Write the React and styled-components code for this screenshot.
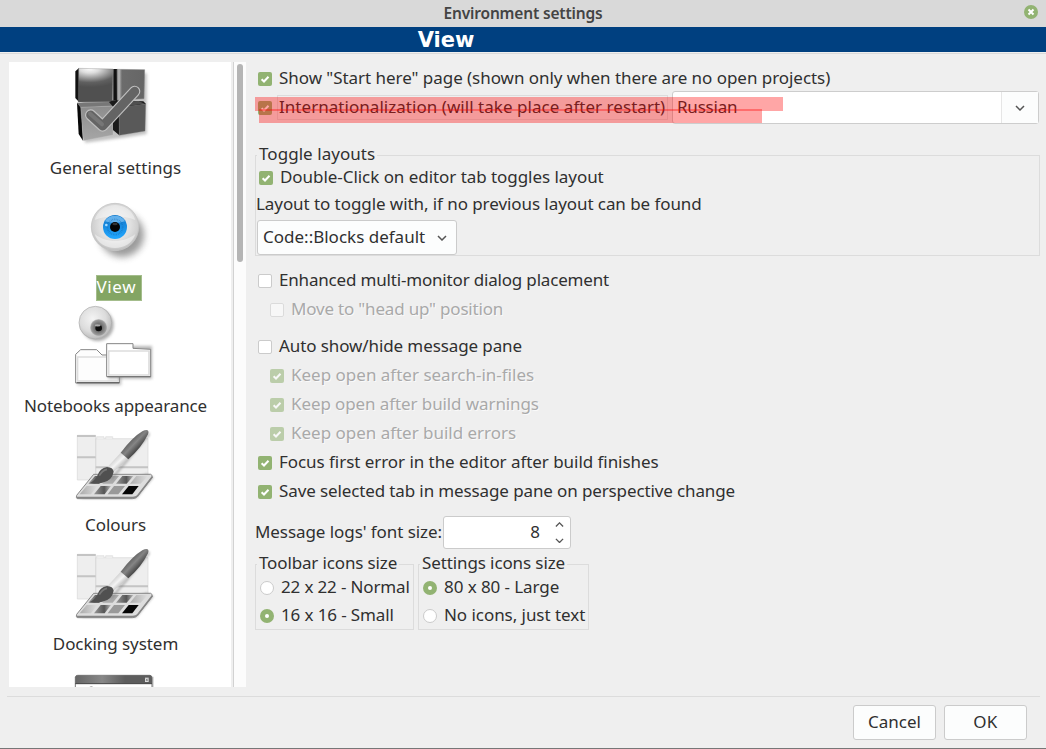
import React from "react";
import styled, { createGlobalStyle } from "styled-components";

const Global = createGlobalStyle`
  * { box-sizing: border-box; }
  body { margin: 0; background: #efefef; }
`;
const Dialog = styled.div`
  width: 1046px; height: 749px; display: flex; flex-direction: column; overflow: hidden;
  background: #efefef; color: #303030; border-bottom: 1px solid #777;
  font: 17px "Noto Sans", "Open Sans", sans-serif;
`;
const TitleBar = styled.header`
  height: 27px; flex: none; background: #d9d9d9; color: #444; display: grid;
  grid-template-columns: 24px 1fr 24px; align-items: center; text-align: center; font-weight: 600; font-size: 15.5px;
`;
const Close = styled.button`
  width: 14px; height: 14px; border: 0; padding: 0; border-radius: 50%; background: #92b372; display: block; margin-left: 2px; margin-top: -3px;
  svg { display: block; }
`;
const Banner = styled.div`
  height: 25px; flex: none; background: #004080; color: #fff; font: bold 21px/26px "DejaVu Sans", sans-serif;
  text-align: center; padding-right: 154px;
`;
const TopRule = styled.div`height: 1px; flex: none; background: #dadada; margin-top: 1px;`;
const Body = styled.main`
  flex: none; height: 643px; display: flex; margin: 0 6px 0 7px; padding: 8px 0 0 2px;
  border-bottom: 1px solid #dcdcdc;
`;
const List = styled.nav`width: 222px; height: 625px; background: #fff; overflow: hidden; padding-top: 6px;`;
const Item = styled.div`
  height: 119px; display: flex; flex-direction: column; align-items: center; padding-right: 9px;
  svg { display: block; width: 80px; height: 80px; overflow: visible; flex: none; margin-right: 1px; }
`;
const ItemLabel = styled.div`
  margin-top: 8px; height: 26px; line-height: 24px; border: 1px solid transparent;
  ${(p) => p.$on && "background:#83a563;border-color:#a4bd8c;color:#fff;width:46px;margin-left:6px;"}
`;
const Track = styled.div`
  width: 13px; height: 625px; margin-left: 2px; background: #fcfcfc; border-left: 1px solid #d2d2d2; padding: 2px 3px 0;
`;
const Thumb = styled.div`width: 6px; height: 198px; border-radius: 3px; background: #b5b5b5;`;
const Panel = styled.section`flex: 1; margin-left: 9px; display: flex; flex-direction: column; align-items: flex-start;`;
const Row = styled.label`
  height: 29px; flex: none; display: flex; align-items: center; padding-left: ${(p) => p.$in ?? 3}px;
  margin-top: ${(p) => p.$mt || 0}px; color: ${(p) => (p.$off ? "#a9a9a9" : "inherit")};
  text-shadow: ${(p) => (p.$off ? "1px 1px 0 #fafafa" : "none")};
`;
const Box = styled.span`
  width: 14px; height: 14px; flex: none; margin-right: 7px; border-radius: ${(p) => (p.$round ? "50%" : "2px")};
  background: ${(p) => (p.$on ? "#92b372" : "#fff")}; border: ${(p) => (p.$on ? "0" : "1px solid #cbcbcb")};
  opacity: ${(p) => (p.$off ? 0.55 : 1)}; display: grid; place-items: center;
  svg { display: block; }
`;
const Dot = styled.span`width: 4px; height: 4px; border-radius: 50%; background: #fff;`;
const Txt = styled.span`
  display: inline-block; padding-bottom: 2px; line-height: 22px; vertical-align: top;
  white-space: nowrap; letter-spacing: ${(p) => p.$ls || 0}px;
`;
const LangRow = styled.div`
  height: 33px; width: 784px; margin-top: -2px; display: flex; align-items: center; position: relative; padding-left: 3px;
`;
const Focus = styled.span`
  width: 391px; height: 25px; margin-left: -2px; border: 1px solid #dcdcdc; padding-left: 1px; flex: none;
`;
const Combo = styled.div`
  margin-left: 4px; width: 367px; height: 33px; flex: none; border: 1px solid #cdcdcd; border-radius: 3px; background: #fff;
  display: flex; align-items: center; justify-content: space-between; padding-left: 4px;
`;
const ComboArrow = styled.span`
  width: 37px; height: 31px; border-left: 1px solid #e6e6e6; background: #fcfdfd; display: grid; place-items: center;
`;
const Mark = styled.span`
  position: absolute; background: rgba(255, 0, 0, 0.35); height: 14px; pointer-events: none;
  left: ${(p) => p.$x}px; top: ${(p) => p.$y}px; width: ${(p) => p.$w}px;
`;
const Group = styled.fieldset`
  border: 1px solid #dcdcdc; margin: 0; padding: 0; width: ${(p) => p.$w}px; height: ${(p) => p.$h}px; min-width: 0; flex: none;
  margin-top: ${(p) => p.$mt || 0}px;
`;
const Legend = styled.legend`
  padding: 0 2px; margin-left: 1px; height: 22px; line-height: 22px;
  ${Txt} { margin-top: -1px; }
`;
const Select = styled.div`
  width: 200px; height: 35px; margin: 3px 0 0 1px; background: #fcfdfd; border: 1px solid #cbcbcb; border-radius: 3px;
  display: flex; align-items: center; justify-content: space-between; padding: 0 9px 0 5px;
`;
const Plain = styled.div`height: 25px; padding-top: 1px; line-height: 24px;`;
const SpinRow = styled.div`height: 33px; margin-top: 10px; display: flex; align-items: center; flex: none;`;
const SpinLabel = styled.span`width: 188px;`;
const Spin = styled.div`
  width: 128px; height: 33px; background: #fff; border: 1px solid #cbcbcb; border-radius: 3px; display: flex;
  align-items: center; justify-content: flex-end; padding-right: 6px; gap: 15px;
`;
const SpinArrows = styled.span`display: flex; flex-direction: column; gap: 11px;`;
const Groups = styled.div`display: flex; gap: 4px; margin-top: 4px;`;
const Footer = styled.footer`flex: 1; display: flex; justify-content: flex-end; gap: 8px; padding: 8px 19px 0 0;`;
const Button = styled.button`
  width: 83px; height: 35px; background: #fcfdfd; border: 1px solid #cbcbcb; border-radius: 3px; padding: 0;
  font: inherit; color: inherit;
`;

const Tick = () => (
  <svg width="14" height="14" viewBox="0 0 14 14"><path d="M3.6 7.2 6 9.5 10.5 4.7" fill="none" stroke="#fff" strokeWidth="2" /></svg>
);
const Chevron = ({ up, s = 10 }) => (
  <svg width={s} height={s * 0.6} viewBox="0 0 10 6"><path d={up ? "M1 5 5 1 9 5" : "M1 1 5 5 9 1"} fill="none" stroke="#555" strokeWidth="1.5" /></svg>
);
const Check = ({ on, off, ls, children, inset, mt }) => (
  <Row $off={off} $in={inset} $mt={mt}><Box $on={on} $off={off}>{on && <Tick />}</Box><Txt $ls={ls}>{children}</Txt></Row>
);
const RadioRow = styled(Row)`height: 28px; margin-top: ${(p) => p.$mt || 0}px; padding-left: 4px;`;
const Radio = ({ on, ls, children, mt }) => (
  <RadioRow $mt={mt}><Box $round $on={on}>{on && <Dot />}</Box><Txt $ls={ls}>{children}</Txt></RadioRow>
);

const CubesIcon = () => (
  <svg viewBox="45 24 240 240">
    <defs>
      <radialGradient id="cA" cx=".22" cy="0" r=".75" gradientTransform="scale(1.5 .75)"><stop offset="0" stopColor="#fff" /><stop offset=".25" stopColor="#ddd" /><stop offset=".75" stopColor="#606060" /><stop offset="1" stopColor="#505050" /></radialGradient>
      <linearGradient id="cB"><stop offset="0" stopColor="#777" /><stop offset=".07" stopColor="#bbb" /><stop offset=".18" stopColor="#6c6c6c" /><stop offset="1" stopColor="#666" /></linearGradient>
      <linearGradient id="cC" x1="0" y1="0" x2="0" y2="1"><stop offset="0" stopColor="#8c8c8c" /><stop offset="1" stopColor="#a6a6a6" /></linearGradient>
      <filter id="sh" x="-20%" y="-20%" width="150%" height="150%"><feGaussianBlur stdDeviation="4" /></filter>
    </defs>
    <path d="M60 40H260V222L185 234 75 248Z" fill="#999" opacity=".6" filter="url(#sh)" />
    <path d="M46 34 57 24V126L46 114Z" fill="#111" />
    <path d="M56 25 159 27 157 125 55 126Z" fill="url(#cA)" stroke="#777" strokeWidth="1" />
    <path d="M160 27H172V124L160 120Z" fill="#111" />
    <path d="M171 28 254 29 252 116 172 120Z" fill="url(#cB)" stroke="#888" strokeWidth="1.5" />
    <path d="M51 128 64 140 69 242 56 222Z" fill="#080808" />
    <path d="M51 128 150 126 159 138 62 143Z" fill="#777" />
    <path d="M62 142 159 138V225L70 242Z" fill="url(#cC)" stroke="#ccc" strokeWidth="1" />
    <path d="M147 126 160 121 250 124 258 132 178 145 178 226 159 210V140Z" fill="#1a1a1a" />
    <path d="M177 142 257 132 255 213 178 226Z" fill="#595959" stroke="#777" strokeWidth="1" />
    <path d="M202 124 236 123 254 131 186 140Z" fill="#4f4f4f" />
    <path d="M92 165 128 198 224 94" fill="none" stroke="#bfbfbf" strokeWidth="34" strokeLinecap="round" strokeLinejoin="round" />
    <path d="M92 165 128 198 224 94" fill="none" stroke="#646464" strokeWidth="27" strokeLinecap="round" strokeLinejoin="round" />
    <path d="M90 161 126 193" fill="none" stroke="#808080" strokeWidth="12" strokeLinecap="round" opacity=".65" />
  </svg>
);
const EyeIcon = () => (
  <svg viewBox="225 -9 240 240">
    <defs>
      <radialGradient id="eW" cx=".5" cy=".45" r=".55"><stop offset="0" stopColor="#eee" /><stop offset=".6" stopColor="#e0e0e0" /><stop offset=".88" stopColor="#cfcfcf" /><stop offset="1" stopColor="#bbb" /></radialGradient>
      <linearGradient id="eB" x1="0" y1="0" x2="0" y2="1"><stop offset="0" stopColor="#0873c8" /><stop offset=".35" stopColor="#1786db" /><stop offset="1" stopColor="#22a8ff" /></linearGradient>
      <filter id="eS" x="-30%" y="-30%" width="170%" height="170%"><feGaussianBlur stdDeviation="11" /></filter>
    </defs>
    <circle cx="366" cy="135" r="66" fill="#666" opacity=".65" filter="url(#eS)" />
    <circle cx="345" cy="111" r="71" fill="url(#eW)" stroke="#c5c5c5" strokeWidth="2.5" />
    <path d="M284 90C300 30 390 30 406 90C370 75 320 75 284 90Z" fill="#fff" opacity=".4" />
    <path d="M284 132C300 188 390 188 406 132C370 160 320 160 284 132Z" fill="#fff" opacity=".45" />
    <circle cx="345" cy="111" r="36" fill="url(#eB)" />
    <path d="M315 94C326 72 364 72 375 94C355 100 335 100 315 94Z" fill="#7fc3f5" opacity=".75" />
    <circle cx="345" cy="111" r="23" fill="none" stroke="#0c64ac" strokeWidth="5" strokeDasharray="2 3" opacity=".5" />
    <circle cx="345" cy="111" r="15" fill="#050505" />
    <ellipse cx="345" cy="102" rx="8" ry="4" fill="#333" />
    <circle cx="319" cy="105" r="4" fill="#a5dbff" />
  </svg>
);
const NotebooksIcon = () => (
  <svg viewBox="225 348 240 240">
    <defs>
      <radialGradient id="nW" cx=".42" cy=".38" r=".62"><stop offset="0" stopColor="#f4f4f4" /><stop offset=".65" stopColor="#dcdcdc" /><stop offset="1" stopColor="#bbb" /></radialGradient>
      <radialGradient id="nI"><stop offset="0" stopColor="#4a4a4a" /><stop offset=".6" stopColor="#808080" /><stop offset=".85" stopColor="#999" /><stop offset="1" stopColor="#c8c8c8" /></radialGradient>
      <filter id="nS" x="-20%" y="-20%" width="150%" height="150%"><feGaussianBlur stdDeviation="4" /></filter>
    </defs>
    <circle cx="293" cy="405" r="48" fill="#777" opacity=".6" filter="url(#nS)" />
    <circle cx="286" cy="398" r="49" fill="url(#nW)" stroke="#aaa" strokeWidth="2" />
    <circle cx="296" cy="413" r="26" fill="url(#nI)" />
    <circle cx="296" cy="414" r="10" fill="#0c0c0c" />
    <ellipse cx="293" cy="406" rx="9" ry="3.5" fill="#aaa" />
    <path d="M232 500H364V586H232Z" fill="#888" opacity=".5" filter="url(#nS)" />
    <path d="M227 579V493L242 479H290L306 495H358V579Z" fill="#fdfdfd" stroke="#858585" strokeWidth="3" strokeLinejoin="round" />
    <path d="M230 578H358" stroke="#666" strokeWidth="4" />
    <path d="M233 573V501H355V573Z" fill="none" stroke="#ddd" strokeWidth="4" />
    <path d="M325 468H456V566H325Z" fill="#888" opacity=".6" filter="url(#nS)" />
    <path d="M320 560V461H399V475L452 478V560Z" fill="#fff" stroke="#858585" strokeWidth="3" strokeLinejoin="round" />
    <path d="M326 555V483H447V555Z" fill="none" stroke="#ddd" strokeWidth="5" />
    <path d="M322 560H452" stroke="#777" strokeWidth="4" />
  </svg>
);
const PaintIcon = ({ id }) => (
  <svg viewBox="45 15 240 240">
    <defs>
      <linearGradient id={id + "h"} x1="0" y1="0" x2="1" y2="1"><stop offset=".3" stopColor="#555" /><stop offset=".48" stopColor="#858585" /><stop offset=".65" stopColor="#444" /></linearGradient>
      <linearGradient id={id + "f"} x1="0" y1="0" x2="1" y2="1"><stop offset=".2" stopColor="#bbb" /><stop offset=".5" stopColor="#f4f4f4" /><stop offset=".8" stopColor="#999" /></linearGradient>
      <linearGradient id={id + "p"}><stop offset="0" stopColor="#aaa" /><stop offset="1" stopColor="#ddd" /></linearGradient>
      <linearGradient id={id + "q"}><stop offset="0" stopColor="#999" /><stop offset=".6" stopColor="#555" /><stop offset="1" stopColor="#bbb" /></linearGradient>
      <filter id={id + "s"} x="-20%" y="-20%" width="150%" height="150%"><feGaussianBlur stdDeviation="3" /></filter>
    </defs>
    <path d="M52 46H107V180H52ZM107 56H264V170H107Z" fill="#eee" stroke="#d8d8d8" strokeWidth="2" />
    <path d="M51 48H107M51 112H107M107 142H264" stroke="#c4c4c4" strokeWidth="6" />
    <path d="M110 57V50H132V57M137 57V50H158V57" fill="#eee" stroke="#ddd" strokeWidth="2" />
    <path d="M60 236H230L282 172 260 160Z" fill="#888" opacity=".5" filter={`url(#${id}s)`} />
    <path d="M101 163H272Q279 166 276 173L233 228Q228 236 217 236H52Q47 233 50 226Z" fill="#ddd" stroke="#888" strokeWidth="3" />
    <path d="M50 233H219Q229 232 233 227L277 170" fill="none" stroke="#858585" strokeWidth="5" />
    <path d="M105 168H137L118 191H85Z" fill={`url(#${id}q)`} />
    <path d="M147 168H177L158 191H127Z" fill="#aaa" />
    <path d="M187 168H220L200 191H168Z" fill={`url(#${id}q)`} />
    <path d="M229 168H263L242 191H210Z" fill={`url(#${id}p)`} />
    <path d="M80 198H112L93 223H59Z" fill={`url(#${id}p)`} />
    <path d="M122 198H153L134 223H102Z" fill={`url(#${id}q)`} />
    <path d="M162 198H195L175 223H143Z" fill="#999" />
    <path d="M206 198H236L217 223H186Z" fill="#050505" />
    <path d="M268 36 270 46 157 180 150 176Z" fill="#777" opacity=".45" filter={`url(#${id}s)`} />
    <path d="M182 98 205 118 157 158 142 142Z" fill={`url(#${id}f)`} />
    <path d="M261 30Q268 32 264 43Q245 83 205 118L182 98Q218 51 247 34Q256 29 261 30Z" fill={`url(#${id}h)`} />
    <path d="M141 141Q159 142 161 155Q157 182 127 188Q108 193 88 190Q103 184 113 165Q119 146 141 141Z" fill="#505050" />
    <path d="M118 167Q126 151 141 148" fill="none" stroke="#757575" strokeWidth="5" />
  </svg>
);
const WindowIcon = () => (
  <svg viewBox="225 729 240 240">
    <defs><linearGradient id="wT"><stop offset="0" stopColor="#666" /><stop offset=".35" stopColor="#888" /><stop offset=".65" stopColor="#5d5d5d" /></linearGradient></defs>
    <path d="M232 770H461V960H232Z" fill="#ccc" />
    <path d="M226 960V772Q227 766 233 766H450Q456 767 456 773V960Z" fill="#fff" stroke="#777" strokeWidth="3" />
    <path d="M226 791V772Q227 766 233 766H450Q456 767 456 773V791Z" fill="url(#wT)" />
    <path d="M226 791H456" stroke="#444" strokeWidth="3" />
    <path d="M435 773H446V786H435Z" fill="#ddd" /><path d="M438 776 443 783M443 776 438 783" stroke="#666" strokeWidth="2" />
    <path d="M266 803Q274 795 282 803Z" fill="#999" />
  </svg>
);

export default function App() {
  return (
    <Dialog>
      <Global />
      <TitleBar>
        <span />
        <Txt $ls={-0.17}>Environment settings</Txt>
        <Close aria-label="Close">
          <svg width="14" height="14" viewBox="0 0 14 14"><path d="M4.5 4.5 9.5 9.5M9.5 4.5 4.5 9.5" stroke="#fff" strokeWidth="2" /></svg>
        </Close>
      </TitleBar>
      <Banner>View</Banner>
      <TopRule />
      <Body>
        <List>
          <Item><CubesIcon /><ItemLabel><Txt $ls={0.05}>General settings</Txt></ItemLabel></Item>
          <Item><EyeIcon /><ItemLabel $on><Txt $ls={0.6}>View</Txt></ItemLabel></Item>
          <Item><NotebooksIcon /><ItemLabel><Txt $ls={-0.13}>Notebooks appearance</Txt></ItemLabel></Item>
          <Item><PaintIcon id="a" /><ItemLabel><Txt $ls={-0.05}>Colours</Txt></ItemLabel></Item>
          <Item><PaintIcon id="b" /><ItemLabel><Txt $ls={-0.06}>Docking system</Txt></ItemLabel></Item>
          <Item><WindowIcon /></Item>
        </List>
        <Track><Thumb /></Track>
        <Panel>
          <Check on mt={2} ls={-0.045}>Show "Start here" page (shown only when there are no open projects)</Check>
          <LangRow>
            <Box $on><Tick /></Box>
            <Focus><Txt $ls={0.04}>Internationalization (will take place after restart)</Txt></Focus>
            <Combo><Txt $ls={-0.2}>Russian</Txt><ComboArrow><Chevron /></ComboArrow></Combo>
            <Mark $x={0} $y={6} $w={528} />
            <Mark $x={4} $y={18} $w={503} />
          </LangRow>
          <Group $w={785} $h={112} $mt={20}>
            <Legend><Txt $ls={0.05}>Toggle layouts</Txt></Legend>
            <Check on mt={-3} ls={-0.05}>Double-Click on editor tab toggles layout</Check>
            <Plain><Txt $ls={-0.07}>Layout to toggle with, if no previous layout can be found</Txt></Plain>
            <Select><Txt>Code::Blocks default</Txt><Chevron /></Select>
          </Group>
          <Check mt={10} ls={-0.18}>Enhanced multi-monitor dialog placement</Check>
          <Check off inset={15} ls={-0.19}>Move to "head up" position</Check>
          <Check mt={8} ls={-0.1}>Auto show/hide message pane</Check>
          <Check on off inset={15}>Keep open after search-in-files</Check>
          <Check on off inset={15} ls={-0.1}>Keep open after build warnings</Check>
          <Check on off inset={15} ls={-0.02}>Keep open after build errors</Check>
          <Check on ls={-0.05}>Focus first error in the editor after build finishes</Check>
          <Check on ls={-0.12}>Save selected tab in message pane on perspective change</Check>
          <SpinRow>
            <SpinLabel><Txt $ls={-0.07}>Message logs' font size:</Txt></SpinLabel>
            <Spin><Txt>8</Txt><SpinArrows><Chevron up s={9} /><Chevron s={9} /></SpinArrows></Spin>
          </SpinRow>
          <Groups>
            <Group $w={159} $h={77}>
              <Legend><Txt $ls={-0.14}>Toolbar icons size</Txt></Legend>
              <Radio mt={-1} ls={-0.15}>22 x 22 - Normal</Radio>
              <Radio on ls={-0.12}>16 x 16 - Small</Radio>
            </Group>
            <Group $w={171} $h={77}>
              <Legend><Txt $ls={-0.11}>Settings icons size</Txt></Legend>
              <Radio on mt={-1} ls={-0.08}>80 x 80 - Large</Radio>
              <Radio ls={-0.05}>No icons, just text</Radio>
            </Group>
          </Groups>
        </Panel>
      </Body>
      <Footer>
        <Button><Txt>Cancel</Txt></Button>
        <Button><Txt $ls={0.4}>OK</Txt></Button>
      </Footer>
    </Dialog>
  );
}
